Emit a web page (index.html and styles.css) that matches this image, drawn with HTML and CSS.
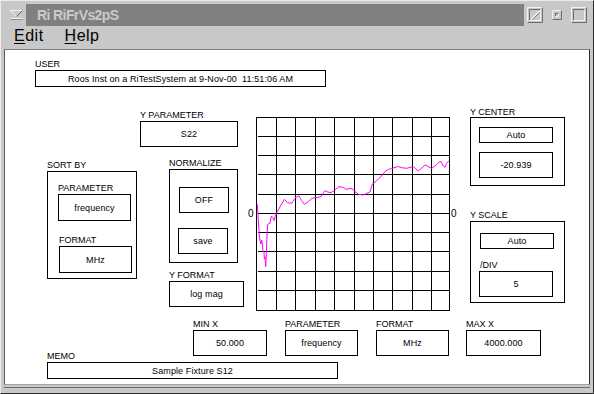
FILE: index.html
```html
<!DOCTYPE html>
<html>
<head>
<meta charset="utf-8">
<link rel="stylesheet" href="styles.css">
</head>
<body>
<div class="window">
  <div class="titlebar">
    <div class="menu-btn">
      <svg width="13" height="10" viewBox="0 0 13 10">
        <path d="M0.5 0.5H12.5" stroke="#f4f4f4" fill="none"/>
        <path d="M0.5 0.5L6.5 6.5" stroke="#f4f4f4" fill="none"/>
        <path d="M12.5 0.5L6.5 6.5" stroke="#6a6a6a" fill="none"/>
        <path d="M0.5 8.5H12.5" stroke="#f4f4f4" fill="none"/>
        <path d="M0.5 9.5H12.5" stroke="#8a8a8a" fill="none"/>
      </svg>
    </div>
    <div class="title">Ri RiFrVs2pS</div>
    <svg class="tb tb-slash" width="16" height="16" viewBox="0 0 16 16">
      <path d="M0.5 15.5V0.5H15.5" stroke="#f2f2f2" fill="none"/>
      <path d="M15.5 0.5V15.5H0.5" stroke="#6c6c6c" fill="none"/>
      <path d="M2.5 13.5V2.5H13.5" stroke="#6c6c6c" fill="none"/>
      <path d="M13.5 2.5V13.5H2.5" stroke="#f2f2f2" fill="none"/>
      <path d="M4 12.5L12.5 4" stroke="#f2f2f2" stroke-width="1.4" fill="none"/>
      <path d="M5 13L13 5" stroke="#7a7a7a" fill="none"/>
    </svg>
    <svg class="tb tb-min" width="10" height="10" viewBox="0 0 10 10">
      <path d="M0.5 9.5V0.5H9.5" stroke="#f2f2f2" fill="none"/>
      <path d="M9.5 0.5V9.5H0.5" stroke="#6c6c6c" fill="none"/>
      <path d="M3.5 6.5V3.5H6.5" stroke="#6c6c6c" fill="none"/>
      <path d="M6.5 3.5V6.5H3.5" stroke="#f2f2f2" fill="none"/>
    </svg>
    <svg class="tb tb-max" width="16" height="16" viewBox="0 0 16 16">
      <path d="M0.5 15.5V0.5H15.5" stroke="#f2f2f2" fill="none"/>
      <path d="M15.5 0.5V15.5H0.5" stroke="#6c6c6c" fill="none"/>
      <path d="M2.5 13.5V2.5H13.5" stroke="#6c6c6c" fill="none"/>
      <path d="M13.5 2.5V13.5H2.5" stroke="#f2f2f2" fill="none"/>
    </svg>
  </div>
  <div class="menubar">
    <span class="menu"><span class="mn">E</span>dit</span>
    <span class="menu"><span class="mn">H</span>elp</span>
  </div>
  <div class="panel">
    <div class="user">
      <div class="lbl">USER</div>
      <div class="field f-user">Roos Inst on a RiTestSystem at 9-Nov-00&nbsp;&nbsp;11:51:06 AM</div>
    </div>
    <div class="main">
      <div class="col-a">
        <div class="lbl">SORT BY</div>
        <div class="group g-sort">
          <div class="lbl">PARAMETER</div>
          <div class="field f-sortp">frequency</div>
          <div class="lbl l-sortf">FORMAT</div>
          <div class="field f-sortf">MHz</div>
        </div>
      </div>
      <div class="col-b">
        <div class="lbl">Y PARAMETER</div>
        <div class="field f-ypar">S22</div>
        <div class="norm">
          <div class="lbl">NORMALIZE</div>
          <div class="group g-norm">
            <div class="field f-btn">OFF</div>
            <div class="field f-btn f-save">save</div>
          </div>
        </div>
        <div class="yfmt">
          <div class="lbl">Y FORMAT</div>
          <div class="field f-yfmt">log mag</div>
        </div>
      </div>
      <div class="col-c">
        <div class="zero">0</div>
        <svg class="graph" width="194" height="194" viewBox="0 0 194 194">
          <g stroke="#000" stroke-width="1" shape-rendering="crispEdges" fill="none">
            <rect x="0.5" y="0.5" width="193" height="193"/>
            <path d="M20.5 0V194M39.5 0V194M59.5 0V194M78.5 0V194M98.5 0V194M117.5 0V194M136.5 0V194M156.5 0V194M175.5 0V194"/>
            <path d="M2 19.5H193M2 38.5H193M2 57.5H193M2 77.5H193M2 96.5H193M2 115.5H193M2 134.5H193M2 154.5H193M2 173.5H193"/>
          </g>
          <g transform="scale(0.33333) translate(-33 -21)">
            <polyline fill="none" stroke="#ff00ff" stroke-width="3" points="37,283 40,330 43,378 46,396 48,402 50,390 52,400 54,424 57,426 58,446 60,440 62,470 64,434 66,380 68,343 75,340 79,318 83,322 87,332 91,318 95,308 100,300 108,285 118,268 128,278 140,280 150,265 156,260 162,258 170,272 178,283 190,275 200,265 215,263 228,260 235,248 240,242 248,246 258,248 270,240 282,230 295,232 302,238 312,236 322,236 330,245 340,253 355,255 365,250 375,246 382,222 392,215 402,205 410,198 420,185 430,178 440,176 450,172 460,170 470,173 485,175 495,172 505,170 512,176 520,183 528,176 540,165 550,170 560,175 570,168 580,158 588,155 595,168 600,172 605,160 612,152"/>
          </g>
        </svg>
        <div class="zero zero-r">0</div>
      </div>
      <div class="col-d">
        <div class="lbl l-tight">Y CENTER</div>
        <div class="group g-ycen">
          <div class="field f-auto">Auto</div>
          <div class="field f-val">-20.939</div>
        </div>
        <div class="yscale">
          <div class="lbl">Y SCALE</div>
          <div class="group g-ysc">
            <div class="field f-auto">Auto</div>
            <div class="lbl l-div">/DIV</div>
            <div class="field f-val f-five">5</div>
          </div>
        </div>
      </div>
    </div>
    <div class="bottom">
      <div class="item">
        <div class="lbl">MIN X</div>
        <div class="field f-minx">50.000</div>
      </div>
      <div class="item">
        <div class="lbl">PARAMETER</div>
        <div class="field f-bp">frequency</div>
      </div>
      <div class="item">
        <div class="lbl">FORMAT</div>
        <div class="field f-bp">MHz</div>
      </div>
      <div class="item item-last">
        <div class="lbl">MAX X</div>
        <div class="field f-maxx">4000.000</div>
      </div>
    </div>
    <div class="memo">
      <div class="lbl">MEMO</div>
      <div class="field f-memo">Sample Fixture S12</div>
    </div>
  </div>
  <div class="footer"></div>
</div>
</body>
</html>
```
FILE: styles.css
```css
html, body {
  margin: 0;
  padding: 0;
  background: #c8c8c8;
}
body {
  font-family: "Liberation Sans", Arial, sans-serif;
  color: #000;
}
.window {
  width: 594px;
  height: 394px;
  box-sizing: border-box;
  border: 1px solid;
  border-color: #ececec #303030 #303030 #ececec;
  padding: 0 3px;
  display: flex;
  flex-direction: column;
  background: #c8c8c8;
}
.titlebar {
  display: flex;
  align-items: center;
  height: 22px;
  margin-top: 3px;
  flex: none;
}
.menu-btn {
  width: 22px;
  height: 22px;
  display: flex;
  align-items: center;
  justify-content: center;
  flex: none;
}
.menu-btn svg {
  display: block;
  margin-left: 3px;
}
.title {
  width: 498px;
  height: 22px;
  flex: none;
  box-sizing: border-box;
  background: #808080;
  color: #cacaca;
  font-weight: bold;
  font-size: 14px;
  line-height: 22px;
  letter-spacing: -0.6px;
  padding-left: 11px;
  white-space: nowrap;
}
.tb {
  display: block;
  flex: none;
}
.tb-slash { margin-left: 3px; }
.tb-min { margin-left: 9px; }
.tb-max { margin-left: 9px; }

.menubar {
  height: 23px;
  flex: none;
  display: flex;
  padding-left: 10px;
  font-size: 16px;
  line-height: 19px;
  letter-spacing: 0.5px;
}
.menu {
  margin-right: 21px;
}
.mn {
  text-decoration: underline;
  text-decoration-thickness: 1px;
  text-underline-offset: 2px;
}

.panel {
  height: 336px;
  flex: none;
  box-sizing: border-box;
  background: #fff;
  border: 1px solid;
  border-color: #7c7c7c #303030 #a4a4a4 #5a5a5a;
}
.footer {
  margin-top: 2px;
  border-top: 1px solid #6e6e6e;
  flex: 1;
}

.lbl {
  font-size: 9px;
  line-height: 10px;
  height: 10px;
  margin-bottom: 1px;
  white-space: nowrap;
}
.l-tight { margin-bottom: 0; }
.field {
  box-sizing: border-box;
  border: 1px solid #000;
  background: #fff;
  display: flex;
  align-items: center;
  justify-content: center;
  font-size: 9px;
  line-height: 10px;
  letter-spacing: 0.1px;
  white-space: nowrap;
}
.group {
  box-sizing: border-box;
  border: 1px solid #000;
}

.user {
  margin: 9px 0 0 30px;
}
.f-user {
  width: 291px;
  height: 17px;
}

.main {
  display: flex;
  align-items: flex-start;
}

/* column A: sort by */
.col-a {
  margin: 73px 0 0 42px;
}
.g-sort {
  width: 90px;
  height: 108px;
  padding: 11px 0 0 10px;
}
.f-sortp, .f-sortf {
  width: 73px;
  height: 27px;
}
.l-sortf {
  margin-top: 14px;
  margin-left: 1px;
}
.f-sortf {
  margin-left: 1px;
}

/* column B */
.col-b {
  margin: 23px 0 0 3px;
}
.f-ypar {
  width: 98px;
  height: 26px;
}
.norm {
  margin: 11px 0 0 29px;
}
.g-norm {
  width: 69px;
  height: 94px;
  padding: 17px 0 0 9px;
}
.f-btn {
  width: 50px;
  height: 26px;
}
.f-save {
  margin: 15px 0 0 -1px;
}
.yfmt {
  margin: 7px 0 0 29px;
}
.f-yfmt {
  width: 75px;
  height: 26px;
}

/* column C: graph */
.col-c {
  display: flex;
  align-items: center;
  margin: 30px 0 0 4px;
}
.graph {
  display: block;
  flex: none;
}
.zero {
  width: 8px;
  font-size: 10px;
  line-height: 10px;
  flex: none;
}
.zero-r {
  margin-left: 1px;
}

/* column D */
.col-d {
  margin: 20px 0 0 11px;
}
.g-ycen {
  width: 95px;
  height: 69px;
  padding: 9px 0 0 8px;
}
.f-auto {
  width: 74px;
  height: 16px;
}
.f-val {
  width: 74px;
  height: 26px;
}
.g-ycen .f-val {
  margin-top: 9px;
}
.yscale {
  margin-top: 24px;
}
.g-ysc {
  width: 95px;
  height: 82px;
  padding: 11px 0 0 9px;
}
.l-div {
  margin-top: 11px;
}
.f-five {
  margin-left: -1px;
}

/* bottom row */
.bottom {
  display: flex;
  margin: 8px 0 0 188px;
}
.item {
  margin-right: 18px;
}
.item:nth-child(3) {
  margin-right: 17px;
}
.item-last {
  margin-right: 0;
}
.f-minx {
  width: 74px;
  height: 26px;
}
.f-bp {
  width: 73px;
  height: 26px;
}
.f-maxx {
  width: 75px;
  height: 26px;
}

.memo {
  margin: -5px 0 0 42px;
}
.f-memo {
  width: 291px;
  height: 17px;
}
```
